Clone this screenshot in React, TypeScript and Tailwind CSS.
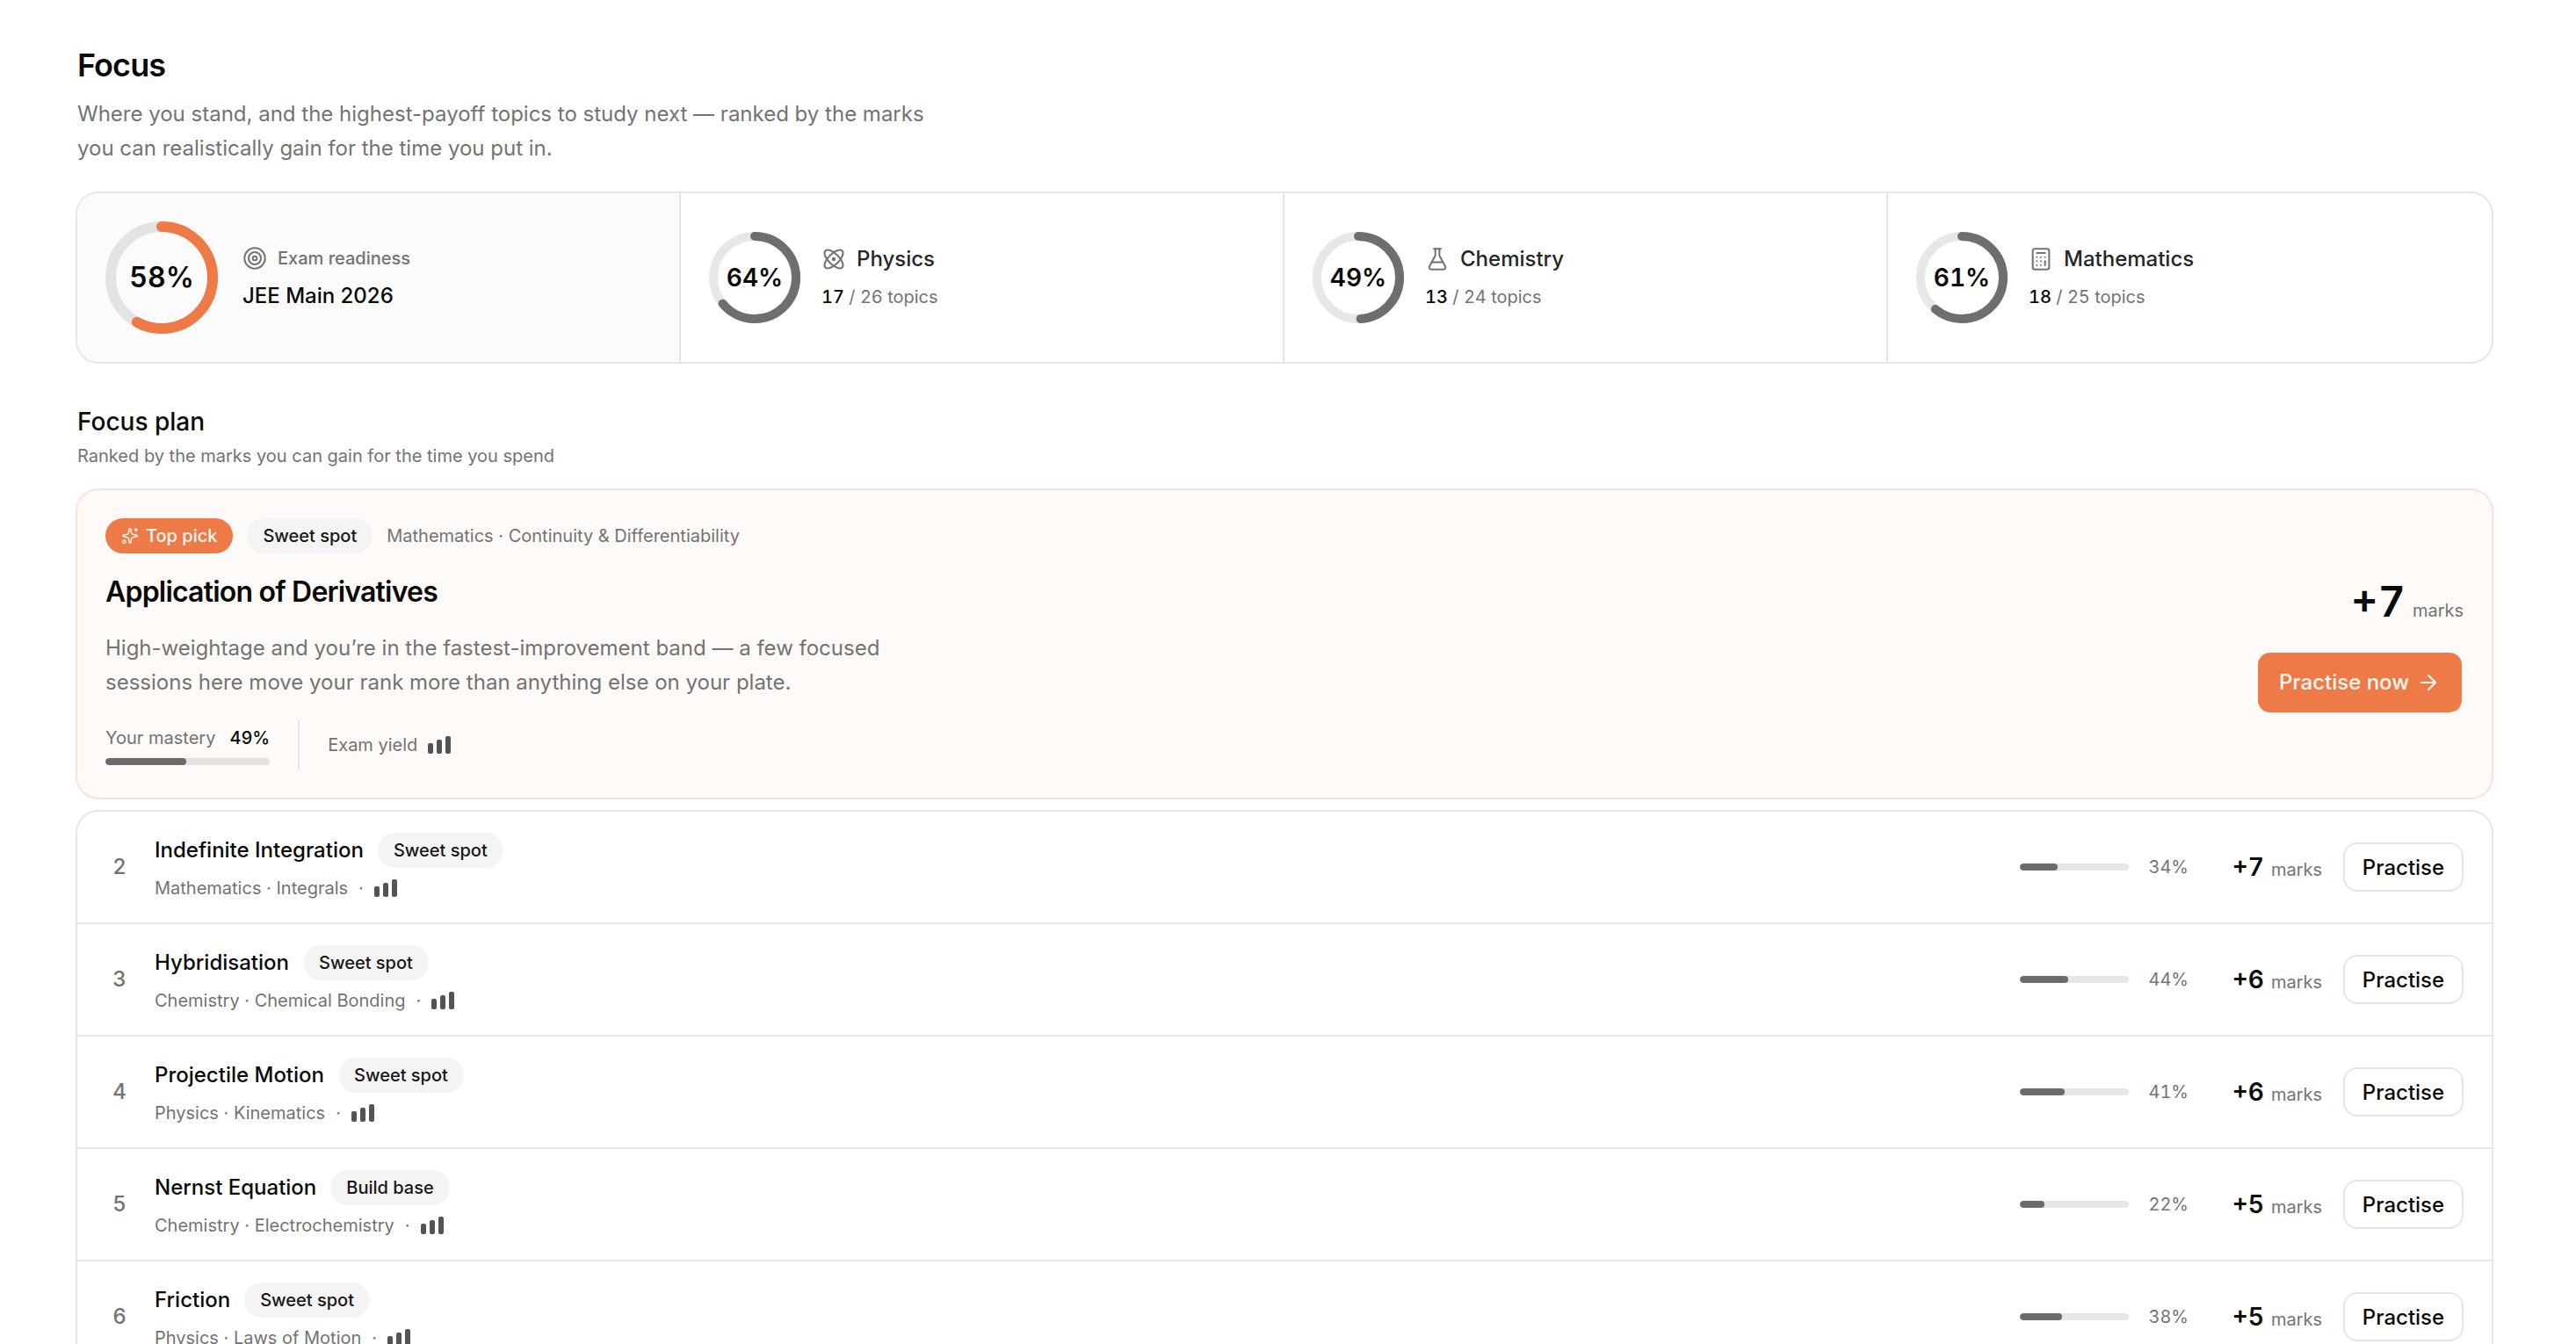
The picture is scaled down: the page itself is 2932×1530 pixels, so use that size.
import { ArrowRight, Atom, Calculator, FlaskConical, Sparkles, Target } from 'lucide-react'
import type { LucideIcon } from 'lucide-react'

interface Subject {
  name: string
  icon: LucideIcon
  percent: number
  done: number
  total: number
}

interface Topic {
  rank: number
  name: string
  tag: string
  path: string
  mastery: number
  marks: number
}

const subjects: Subject[] = [
  { name: 'Physics', icon: Atom, percent: 64, done: 17, total: 26 },
  { name: 'Chemistry', icon: FlaskConical, percent: 49, done: 13, total: 24 },
  { name: 'Mathematics', icon: Calculator, percent: 61, done: 18, total: 25 },
]

const topics: Topic[] = [
  { rank: 2, name: 'Indefinite Integration', tag: 'Sweet spot', path: 'Mathematics · Integrals', mastery: 34, marks: 7 },
  { rank: 3, name: 'Hybridisation', tag: 'Sweet spot', path: 'Chemistry · Chemical Bonding', mastery: 44, marks: 6 },
  { rank: 4, name: 'Projectile Motion', tag: 'Sweet spot', path: 'Physics · Kinematics', mastery: 41, marks: 6 },
  { rank: 5, name: 'Nernst Equation', tag: 'Build base', path: 'Chemistry · Electrochemistry', mastery: 22, marks: 5 },
  { rank: 6, name: 'Friction', tag: 'Sweet spot', path: 'Physics · Laws of Motion', mastery: 38, marks: 5 },
]

interface RingProps {
  percent: number
  size: number
  stroke: number
  className: string
  labelClassName: string
}

function Ring({ percent, size, stroke, className, labelClassName }: RingProps) {
  const r = (size - stroke) / 2
  const c = 2 * Math.PI * r

  return (
    <div className="relative grid shrink-0 place-items-center">
      <svg width={size} height={size} className="-rotate-90" fill="none" strokeWidth={stroke}>
        <circle cx={size / 2} cy={size / 2} r={r} className="stroke-black/[0.095]" />
        <circle
          cx={size / 2}
          cy={size / 2}
          r={r}
          className={className}
          strokeLinecap="round"
          strokeDasharray={`${(c * percent) / 100} ${c}`}
        />
      </svg>
      <span className={`absolute font-semibold tabular-nums ${labelClassName}`}>{percent}%</span>
    </div>
  )
}

function Meter({ value }: { value: number }) {
  return (
    <div className="h-2 w-full overflow-hidden rounded-full bg-black/[0.095]">
      <div className="h-full rounded-full bg-[#6b6b6b]" style={{ width: `${value}%` }} />
    </div>
  )
}

function YieldBars() {
  return (
    <span className="flex items-end gap-1">
      <span className="h-3 w-1.5 rounded-[2px] bg-[#545454]" />
      <span className="h-4 w-1.5 rounded-[2px] bg-[#545454]" />
      <span className="h-5 w-1.5 rounded-[2px] bg-[#545454]" />
    </span>
  )
}

function Tag({ children }: { children: string }) {
  return (
    <span className="flex h-10 items-center rounded-full bg-[#f4f4f4] px-[18px] text-[20px] font-medium text-[#171717]">
      {children}
    </span>
  )
}

function SubjectCell({ subject }: { subject: Subject }) {
  const Icon = subject.icon

  return (
    <div className="flex items-center gap-6 border-r-2 border-[#e5e5e5] px-8 last:border-r-0">
      <Ring
        percent={subject.percent}
        size={104}
        stroke={10}
        className="stroke-[#6e6e6e]"
        labelClassName="text-[28px]"
      />
      <div>
        <div className="flex h-9 items-center gap-3 text-[#262626]">
          <Icon size={28} strokeWidth={1.75} className="text-[#737373]" />
          <span className="font-medium">{subject.name}</span>
        </div>
        <p className="mt-[7px] text-[20px] leading-9 text-[#737373] tabular-nums">
          <span className="font-medium text-[#0a0a0a]">{subject.done}</span> / {subject.total} topics
        </p>
      </div>
    </div>
  )
}

function TopPick() {
  return (
    <div className="mt-6 flex h-[350px] items-center justify-between rounded-3xl bg-[#fefaf7] p-8 ring-2 ring-[#fbe2d8]">
      <div>
        <div className="flex items-center gap-4">
          <span className="flex h-10 items-center gap-2 rounded-full bg-[#ee7a48] px-[18px] text-[20px] font-medium text-[#fff7f0]">
            <Sparkles size={20} strokeWidth={1.75} />
            Top pick
          </span>
          <Tag>Sweet spot</Tag>
          <span className="text-[20px] text-[#737373]">Mathematics · Continuity &amp; Differentiability</span>
        </div>
        <h3 className="mt-[25px] text-[32px] leading-[38px] font-semibold tracking-tight">Application of Derivatives</h3>
        <p className="mt-[25px] w-[900px] leading-[39px] text-[#737373]">
          High-weightage and you’re in the fastest-improvement band — a few focused sessions here move your rank more
          than anything else on your plate.
        </p>
        <div className="mt-6 flex h-14 items-center gap-8 text-[20px] text-[#737373]">
          <div className="flex flex-col gap-2">
            <div className="flex justify-between gap-4 leading-[30px]">
              <span>Your mastery</span>
              <span className="font-medium text-[#0a0a0a] tabular-nums">49%</span>
            </div>
            <Meter value={49} />
          </div>
          <div className="h-full w-0.5 bg-[#e5e5e5]" />
          <div className="flex items-center gap-3">
            Exam yield
            <YieldBars />
          </div>
        </div>
      </div>

      <div className="flex flex-col items-end gap-5 pb-1">
        <div className="flex items-baseline gap-2">
          <span className="text-[48px] leading-[72px] font-semibold tabular-nums">+7</span>
          <span className="text-[20px] text-[#737373]">marks</span>
        </div>
        <button className="flex h-[72px] w-[236px] items-center justify-center gap-2 rounded-2xl border-2 border-transparent bg-[#ee7a48] bg-clip-padding font-medium text-[#fff7f0]">
          Practise now
          <ArrowRight size={28} strokeWidth={1.75} />
        </button>
      </div>
    </div>
  )
}

function TopicRow({ topic }: { topic: Topic }) {
  return (
    <div className="flex h-32 shrink-0 items-center border-b-2 border-[#e5e5e5] px-8">
      <span className="w-8 text-center font-medium text-[#737373] tabular-nums">{topic.rank}</span>
      <div className="ml-6 flex-1">
        <div className="flex items-center gap-4">
          <span className="font-medium">{topic.name}</span>
          <Tag>{topic.tag}</Tag>
        </div>
        <div className="mt-2 flex items-center gap-3 text-[20px] leading-[30px] text-[#737373]">
          <span>{topic.path}</span>
          <span>·</span>
          <YieldBars />
        </div>
      </div>
      <div className="w-[124px]">
        <Meter value={topic.mastery} />
      </div>
      <span className="ml-[22px] text-[20px] text-[#737373] tabular-nums">{topic.mastery}%</span>
      <div className="flex w-[152px] items-baseline justify-end gap-2 pt-[3px]">
        <span className="text-[28px] font-semibold tabular-nums">+{topic.marks}</span>
        <span className="text-[20px] text-[#737373]">marks</span>
      </div>
      <button className="ml-6 flex h-14 w-[137px] items-center justify-center rounded-2xl border-2 border-[#e5e5e5] bg-white pt-0.5 font-medium">
        Practise
      </button>
    </div>
  )
}

export default function App() {
  return (
    <div className="h-[1530px] overflow-hidden bg-white pt-12 pr-24 pl-[88px] font-['Inter',sans-serif] text-[24px] leading-9 text-[#0a0a0a] antialiased">
      <h1 className="text-[36px] leading-[52px] font-semibold tracking-tight">Focus</h1>
      <p className="mt-2.5 w-[980px] leading-[39px] text-[#737373]">
        Where you stand, and the highest-payoff topics to study next — ranked by the marks you can realistically gain
        for the time you put in.
      </p>

      <div className="mt-8 grid h-48 grid-cols-4 overflow-hidden rounded-3xl bg-white ring-2 ring-[#e7e7e7]">
        <div className="flex items-center gap-7 border-r-2 border-[#e5e5e5] bg-[#fbfbfb] px-8">
          <Ring percent={58} size={128} stroke={12} className="stroke-[#ee7a48]" labelClassName="text-[32px]" />
          <div className="pt-0.5">
            <div className="flex h-[30px] items-center gap-3 text-[20px] text-[#737373]">
              <Target size={28} strokeWidth={1.75} />
              <span className="font-medium">Exam readiness</span>
            </div>
            <p className="mt-2.5 font-medium">JEE Main 2026</p>
          </div>
        </div>
        {subjects.map((subject) => (
          <SubjectCell key={subject.name} subject={subject} />
        ))}
      </div>

      <h2 className="mt-12 text-[28px] leading-10 font-medium">Focus plan</h2>
      <p className="mt-1 text-[20px] leading-[30px] text-[#737373]">
        Ranked by the marks you can gain for the time you spend
      </p>

      <TopPick />

      <div className="mt-4 overflow-hidden rounded-3xl bg-white ring-2 ring-[#e7e7e7]">
        {topics.map((topic) => (
          <TopicRow key={topic.rank} topic={topic} />
        ))}
      </div>
    </div>
  )
}
